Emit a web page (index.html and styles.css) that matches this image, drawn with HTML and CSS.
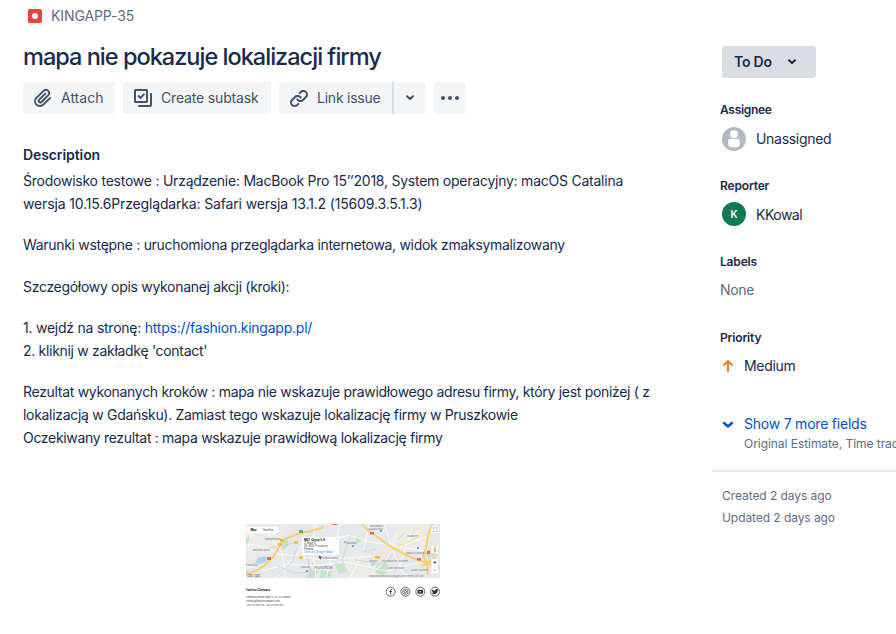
FILE: index.html
```html
<!DOCTYPE html>
<html lang="pl">
<head>
<meta charset="utf-8">
<title>KINGAPP-35</title>
<link rel="stylesheet" href="styles.css">
</head>
<body>
<div class="issue">
  <main class="main">
    <div class="breadcrumb">
      <svg width="14" height="14" viewBox="0 0 14 14"><rect width="14" height="14" rx="1.8" fill="#e5493a"/><circle cx="7" cy="7" r="3" fill="#fff"/></svg>
      <span>KINGAPP-35</span>
    </div>
    <h1 class="title">mapa nie pokazuje lokalizacji firmy</h1>
    <div class="toolbar">
      <button class="btn attach">
        <svg width="24" height="24" viewBox="0 0 24 24"><path d="M11.643 17.965c-1.53 1.495-4.016 1.496-5.542.004a3.773 3.773 0 0 1 .002-5.412l7.147-6.985a2.316 2.316 0 0 1 3.233-.003c.893.873.895 2.282.004 3.153l-6.703 6.55a.653.653 0 0 1-.914-.008.62.62 0 0 1 0-.902l6.229-6.087a.941.941 0 0 0 0-1.353.995.995 0 0 0-1.384 0l-6.23 6.087a2.502 2.502 0 0 0 0 3.607 2.643 2.643 0 0 0 3.683.009l6.703-6.55a4.074 4.074 0 0 0-.003-5.859 4.306 4.306 0 0 0-6.002.003l-7.148 6.985a5.655 5.655 0 0 0-.001 8.118c2.29 2.239 6.015 2.238 8.31-.005l6.686-6.533a.941.941 0 0 0 0-1.353.995.995 0 0 0-1.384 0l-6.686 6.534z" fill="#42526e" fill-rule="evenodd"/></svg>
        <span>Attach</span>
      </button>
      <button class="btn subtask">
        <svg width="24" height="24" viewBox="0 0 24 24" fill="none" stroke="#42526e" stroke-width="2" stroke-linecap="round" stroke-linejoin="round"><rect x="4" y="4" width="12" height="12" rx=".6"/><path d="M7.6 10l2 1.9 3.2-3.6M20 8v11a1 1 0 0 1-1 1H8"/></svg>
        <span>Create subtask</span>
      </button>
      <div class="split">
        <button class="btn link">
          <svg width="24" height="24" viewBox="0 0 24 24"><path d="M12.856 5.457l-.937.92a1.002 1.002 0 0 0 0 1.437 1.047 1.047 0 0 0 1.463 0l.984-.966c.967-.95 2.542-1.135 3.602-.288a2.54 2.54 0 0 1 .203 3.81l-2.903 2.852a2.646 2.646 0 0 1-3.696 0l-1.11-1.09L9 13.57l1.108 1.089c1.822 1.788 4.802 1.788 6.622 0l2.905-2.852a4.558 4.558 0 0 0-.357-6.82c-1.893-1.517-4.695-1.226-6.422.47" fill="#42526e"/><path d="M11.144 19.543l.937-.92a1.002 1.002 0 0 0 0-1.437 1.047 1.047 0 0 0-1.462 0l-.985.966c-.967.95-2.542 1.135-3.602.288a2.54 2.54 0 0 1-.203-3.81l2.903-2.852a2.646 2.646 0 0 1 3.696 0l1.11 1.09L15 11.43l-1.108-1.089c-1.822-1.788-4.802-1.788-6.622 0l-2.905 2.852a4.558 4.558 0 0 0 .357 6.82c1.893 1.517 4.695 1.226 6.422-.47" fill="#42526e"/></svg>
          <span>Link issue</span>
        </button>
        <button class="btn drop"><svg width="10" height="6" viewBox="0 0 10 6"><path d="M2 1.3l3 2.8 3-2.8" fill="none" stroke="#42526e" stroke-width="2" stroke-linecap="round" stroke-linejoin="round"/></svg></button>
      </div>
      <button class="btn more"><svg width="20" height="6" viewBox="0 0 20 6" fill="#42526e"><circle cx="3" cy="3" r="2"/><circle cx="10" cy="3" r="2"/><circle cx="17" cy="3" r="2"/></svg></button>
    </div>
    <h2 class="heading">Description</h2>
    <div class="description">
      <p><span class="l1">Środowisko testowe : Urządzenie: MacBook Pro 15’’2018, System operacyjny: macOS Catalina</span><br><span class="l2">wersja 10.15.6Przeglądarka: Safari wersja 13.1.2 (15609.3.5.1.3)</span></p>
      <p>Warunki wstępne : uruchomiona przeglądarka internetowa, widok zmaksymalizowany</p>
      <p>Szczegółowy opis wykonanej akcji (kroki):</p>
      <p><span class="l1">1. wejdź na stronę: <a>https://fashion.kingapp.pl/</a></span><br>2. kliknij w zakładkę 'contact'</p>
      <p>Rezultat wykonanych kroków : mapa nie wskazuje prawidłowego adresu firmy, który jest poniżej ( z<br>lokalizacją w Gdańsku). Zamiast tego wskazuje lokalizację firmy w Pruszkowie<br><span class="l9">Oczekiwany rezultat : mapa wskazuje prawidłową lokalizację firmy</span></p>
    </div>
    <svg class="attachment" width="194" height="86" viewBox="0 0 194 86">
      <defs><clipPath id="map"><rect width="194" height="54"/></clipPath></defs>
      <g clip-path="url(#map)" fill="none">
        <rect width="194" height="54" fill="#e6e8e9"/>
        <path d="M0 0h40l-6 16L18 38 0 46zM102 34l28 2 12 18H98zM150 0h34l-4 30-30-12z" fill="#ebebe7"/>
        <path d="M36 18l5-5 2 8-7 6zM88 38l9 2 4 7-8 3zM131 40l8-3 4 7-6 8-8-4zM176 28l14-6 4 8-12 4zM112 12l4 3-4 4-3-3zM0 15l4-3 1 6-5 3zM64 45l8 2-3 7h-9zM75 46l11 2-2 6H74z" fill="#c4e3c7"/>
        <path d="M12 34l8-2 1 5-7 3-5-1zM0 46l5 4-5 1zM124 39l7 1-5 2z" fill="#a8d5f7"/>
        <path d="M0 20l20 3 12 7 20 2 24 4 25-2 30-2 20-8 30-12M18 0l8 16 10 13 4 25M60 9l-6 17-10 12-14 16M70 0l-4 18 4 36M94 0l-4 17-10 37M124 0l-8 30-12 24M84 16l20-5 20 7 26 4 44 8M150 10l-8 24-20 20M166 4l-6 18-10 32M8 0L2 24M0 42l19 4 24-6 26 2 30-4 42 9 30-8M138 0l10 30 12 24" stroke="#fff" stroke-width=".8"/>
        <path d="M51 24l-5 14-14 12M61 30l4 24M105 10l-9 26 7 15M116 28l14-3M147 29l-12 16M159 8l-7 8M22 24l27-5M109 36l30 4M32 42l17 7 21-1" stroke="#c9ced3" stroke-width=".7"/>
        <path d="M127 33l18-7 17-8 20-8" stroke="#f7e6ad" stroke-width="1.4"/>
        <path d="M0 50c12-2 20-9 27-17 5-6 6-13 11-17 10-7 24-7 40-13M114-2c4 4 6 8 13 12 9 5 12 10 20 14 11 5 17 10 25 12l9 3 14 6M181 39l-4-7 3-8 2-12 4-12M176 42l5-3 1 12M181 39l9-6" stroke="#f6d070" stroke-width="2"/>
        <path d="M34 15h4v3h-4zM32 19h4v3h-4zM48 17h4v3h-4zM53 32h4v3h-4zM129 32h5v2.5h-5z" fill="#edc33a"/>
        <path d="M53 6h4v3h-4z" fill="#68ad54"/><path d="M21 33h4v3h-4zM124 8h4v2.5h-4zM171 34h4v2.5h-4zM181 27h3v3h-3zM86-1h5v2h-5z" fill="#e36962"/>
        <g fill="#5d92df"><circle cx="61" cy="47" r="1.1"/><circle cx="107" cy="22" r="1.1"/><circle cx="135" cy="7" r="1.1"/><circle cx="172" cy="24" r="1.1"/></g>
        <g class="maptext"><text x="19" y="15.5">Domaniewek</text><text x="7" y="27">Moszna-Wieś</text><text x="0" y="42">Parzniew</text><text x="98" y="19.5" class="mid">Piastów</text><text x="55" y="44">Żbików</text><text x="68" y="44.5" class="town">Pruszków</text><text x="76" y="34.5">Komorowska</text><text x="123" y="37.5">Reguły</text><text x="136" y="37.5">Michałowice-Osiedle</text><text x="143" y="44.5">Michałowice</text><text x="160" y="30">Opacz-Kolonia</text><text x="165" y="47">Nowe Włochy</text><text x="124" y="3">DWORZEC</text><text x="122" y="5.5">WARSZAWA</text><text x="161" y="12.5">WŁOCHY</text><text x="123" y="53">Map data ©2020 Google   2 km   Terms of Use</text></g>
        <rect x=".8" y="2.8" width="31" height="6.5" rx=".5" fill="#fff"/>
        <rect x="56" y="13" width="37" height="18" rx=".6" fill="#fff"/><path d="M73 30.8l2 3 2-3z" fill="#fff"/>
        <path d="M73 32l1.2 2.5 1.2-2.5" stroke="#445264" stroke-width="1.2"/>
        <path d="M90.8 14.2l1 1m0-1l-1 1" stroke="#777" stroke-width=".3"/>
        <g fill="#fff"><rect x="185.5" y="2" width="6.5" height="7"/><rect x="185.5" y="22" width="6.5" height="7"/><rect x="185.5" y="35" width="6.5" height="14"/></g>
        <path d="M187 5V3.7h1.2M189.4 3.7h1.2V5M187 6.3v1.2h1.2M189.4 7.5h1.2V6.3M187.3 46h3" stroke="#777" stroke-width=".6"/><path d="M187.2 38.5h3.2M188.8 36.9v3.2" stroke="#444" stroke-width=".8"/>
        <circle cx="188.8" cy="23.7" r="1" fill="#e8a02b"/><path d="M187.5 25h2.6l-.6 3.5h-1.4z" fill="#f0ae35"/>
      </g>
      <g class="tiny"><text x="4.5" y="7.1" class="strong">Map</text><text x="17" y="7.1">Satellite</text>
      <text x="58" y="17.3" class="strong">MGT Group S.A</text><text x="58" y="20.3">3 Maja 8</text><text x="58" y="23.2">05-800 Pruszków</text><text x="58" y="26">Poland</text><text x="58" y="29.2" class="blue">View on Google Maps</text></g>
      <g class="tiny contact"><text x="0" y="66.5" class="strong">Fashion Company</text><text x="0" y="73.8">Stefana Czarnieckiego 12, 81-221 Gdańsk</text><text x="0" y="78.2">contact@fashioncompany.com</text><text x="0" y="82.4">+48 123 456 789  +48 321 654 987</text></g>
      <text x="1" y="53" class="google"><tspan fill="#4285f4">G</tspan><tspan fill="#ea4335">o</tspan><tspan fill="#fbbc05">o</tspan><tspan fill="#4285f4">g</tspan><tspan fill="#34a853">l</tspan><tspan fill="#ea4335">e</tspan></text>
      <g fill="none" stroke="#444" stroke-width=".8"><circle cx="144.7" cy="67.7" r="4.5"/><circle cx="159.4" cy="67.7" r="4.5"/><circle cx="174.3" cy="67.7" r="4.5"/><circle cx="189" cy="67.7" r="4.5"/><path d="M146.3 65.3h-.7q-.9 0-.9.9v4.2M143.4 67.5h2.5" stroke-width="1"/><rect x="157" y="65.3" width="4.8" height="4.8" rx="1.3"/><circle cx="159.4" cy="67.7" r="1.1"/></g>
      <rect x="171.5" y="65.7" width="5.6" height="4" rx="1" fill="#333"/><path d="M173.6 66.7v2l1.7-1z" fill="#fff"/>
      <path d="M186.2 65.4q1.3 1.4 2.8 1.4 0-1.8 1.6-1.8l1 .4.9-.2-.7 1c0 3.4-3.6 5-6 3.5l1.6-.6-1.2-1 .5-.1-.8-1.1z" fill="#333"/>
    </svg>
  </main>
  <aside class="side">
    <button class="status"><span>To Do</span><svg width="10" height="6" viewBox="0 0 10 6"><path d="M2 1.3l3 2.8 3-2.8" fill="none" stroke="#172b4d" stroke-width="2" stroke-linecap="round" stroke-linejoin="round"/></svg></button>
    <section class="field"><h3 class="assignee">Assignee</h3><div class="value person"><svg width="24" height="24" viewBox="0 0 24 24"><circle cx="12" cy="12" r="12" fill="#b3bac5"/><circle cx="12" cy="7.3" r="4" fill="#fff"/><path d="M6.2 13.6q0-1.6 1.6-1.6h8.4q1.6 0 1.6 1.6V17q0 3.6-5.8 3.6T6.2 17z" fill="#fff"/></svg><span>Unassigned</span></div></section>
    <section class="field"><h3>Reporter</h3><div class="value person reporter"><i class="avatar">K</i><span>KKowal</span></div></section>
    <section class="field"><h3>Labels</h3><div class="value none"><span>None</span></div></section>
    <section class="field"><h3>Priority</h3><div class="value priority"><svg width="12" height="14" viewBox="0 0 12 14"><path d="M6 12V2.5M2 6l4-4 4 4" fill="none" stroke="#ed7a2e" stroke-width="2" stroke-linecap="round" stroke-linejoin="round"/></svg><span>Medium</span></div></section>
    <div class="showmore"><svg width="12" height="8" viewBox="0 0 12 8"><path d="M2 2l4 3.5L10 2" fill="none" stroke="#0052cc" stroke-width="2.4" stroke-linecap="round" stroke-linejoin="round"/></svg><div><a>Show 7 more fields</a><small>Original Estimate, Time tracking</small></div></div>
    <div class="dates"><div>Created 2 days ago</div><div>Updated 2 days ago</div></div>
  </aside>
</div>
</body>
</html>
```
FILE: styles.css
```css
body { margin: 0; font-family: Inter, "Liberation Sans", sans-serif; font-size: 14px; color: #172b4d; background: #fff; overflow: hidden; }
h1, h2, h3, p { margin: 0; }
button { font: inherit; color: inherit; border: 0; padding: 0; margin: 0; }
svg { display: block; flex: none; }
a { color: #0052cc; }
.issue { display: grid; grid-template-columns: 689px 184px; padding-left: 23px; height: 634px; white-space: nowrap; overflow: hidden; }
.breadcrumb { display: flex; align-items: center; gap: 9px; height: 32px; padding-left: 5px; color: #5e6c84; letter-spacing: -.1px; }
.breadcrumb span, .btn span, .status span, .value span { padding-bottom: 2px; }
.title { margin-top: 11px; height: 28px; font-size: 23.5px; line-height: 28px; font-weight: 550; letter-spacing: -.98px; }
.toolbar { display: flex; gap: 8px; margin-top: 11px; }
.split { display: flex; }
.btn { display: flex; align-items: center; gap: 6px; height: 32px; box-sizing: border-box; padding-left: 8px; border-radius: 3px; background: #f4f5f7; color: #42526e; }
.attach { width: 92px; }
.subtask { width: 148px; letter-spacing: -.16px; }
.link { width: 113px; border-radius: 3px 0 0 3px; letter-spacing: -.23px; }
.drop { width: 34px; padding: 0; justify-content: center; border-left: 2px solid #d9dce3; border-radius: 0 3px 3px 0; }
.more { width: 32px; padding: 0; justify-content: center; }
.heading { margin-top: 31px; font-size: 14px; line-height: 20px; font-weight: 600; letter-spacing: -.09px; }
.description { display: grid; gap: 18.35px; margin-top: 3.9px; line-height: 23px; letter-spacing: -.306px; }
.l1 { letter-spacing: -.238px; }
.l2 { letter-spacing: -.155px; }
.l9 { letter-spacing: -.315px; }
.attachment { margin: 74.7px 0 0 223px; }
.maptext { font-size: 2.6px; fill: #717983; }
.maptext .mid { font-size: 3.4px; }
.maptext .town { font-size: 4px; }
.tiny { font-size: 2.8px; fill: #444; }
.contact { font-size: 2.3px; }
.contact .strong { font-size: 2.8px; }
.strong { font-weight: 700; fill: #111; }
.blue { fill: #4285f4; }
.google { font-size: 4px; font-weight: 500; }
.side { padding-top: 46px; }
.status { display: flex; align-items: center; gap: 15px; width: 94px; height: 32px; box-sizing: border-box; margin: 0 0 24px 10px; padding-left: 12px; border-radius: 3px; background: #dadde2; font-weight: 600; letter-spacing: -.2px; }
.field { height: 76px; padding-left: 8px; }
h3 { font-size: 12px; line-height: 16px; font-weight: 600; letter-spacing: -.17px; }
h3.assignee { letter-spacing: -.3px; }
.value { display: flex; align-items: center; height: 42px; letter-spacing: -.3px; }
.person { gap: 10px; padding-left: 2px; }
.reporter { letter-spacing: -.5px; }
.avatar { width: 24px; height: 24px; margin-top: -2px; border-radius: 50%; background: #0f7b54; color: #fff; font: 600 10px/24px Inter, sans-serif; text-align: center; letter-spacing: 0; }
.none { height: 40px; color: #5e6c84; }
.priority { height: 40px; gap: 10px; padding-left: 2px; }
.showmore { display: flex; gap: 10px; height: 57px; padding: 8px 0 0 10px; letter-spacing: -.22px; line-height: 20px; }
.showmore svg { margin-top: 7px; }
.showmore small { display: block; font-size: 12px; line-height: 19px; color: #5e6c84; letter-spacing: -.05px; }
.dates { margin-top: -1px; padding: 13px 0 0 10px; border-top: 2px solid #e4e6eb; color: #5e6c84; font-size: 12px; line-height: 22px; letter-spacing: -.07px; }
```
